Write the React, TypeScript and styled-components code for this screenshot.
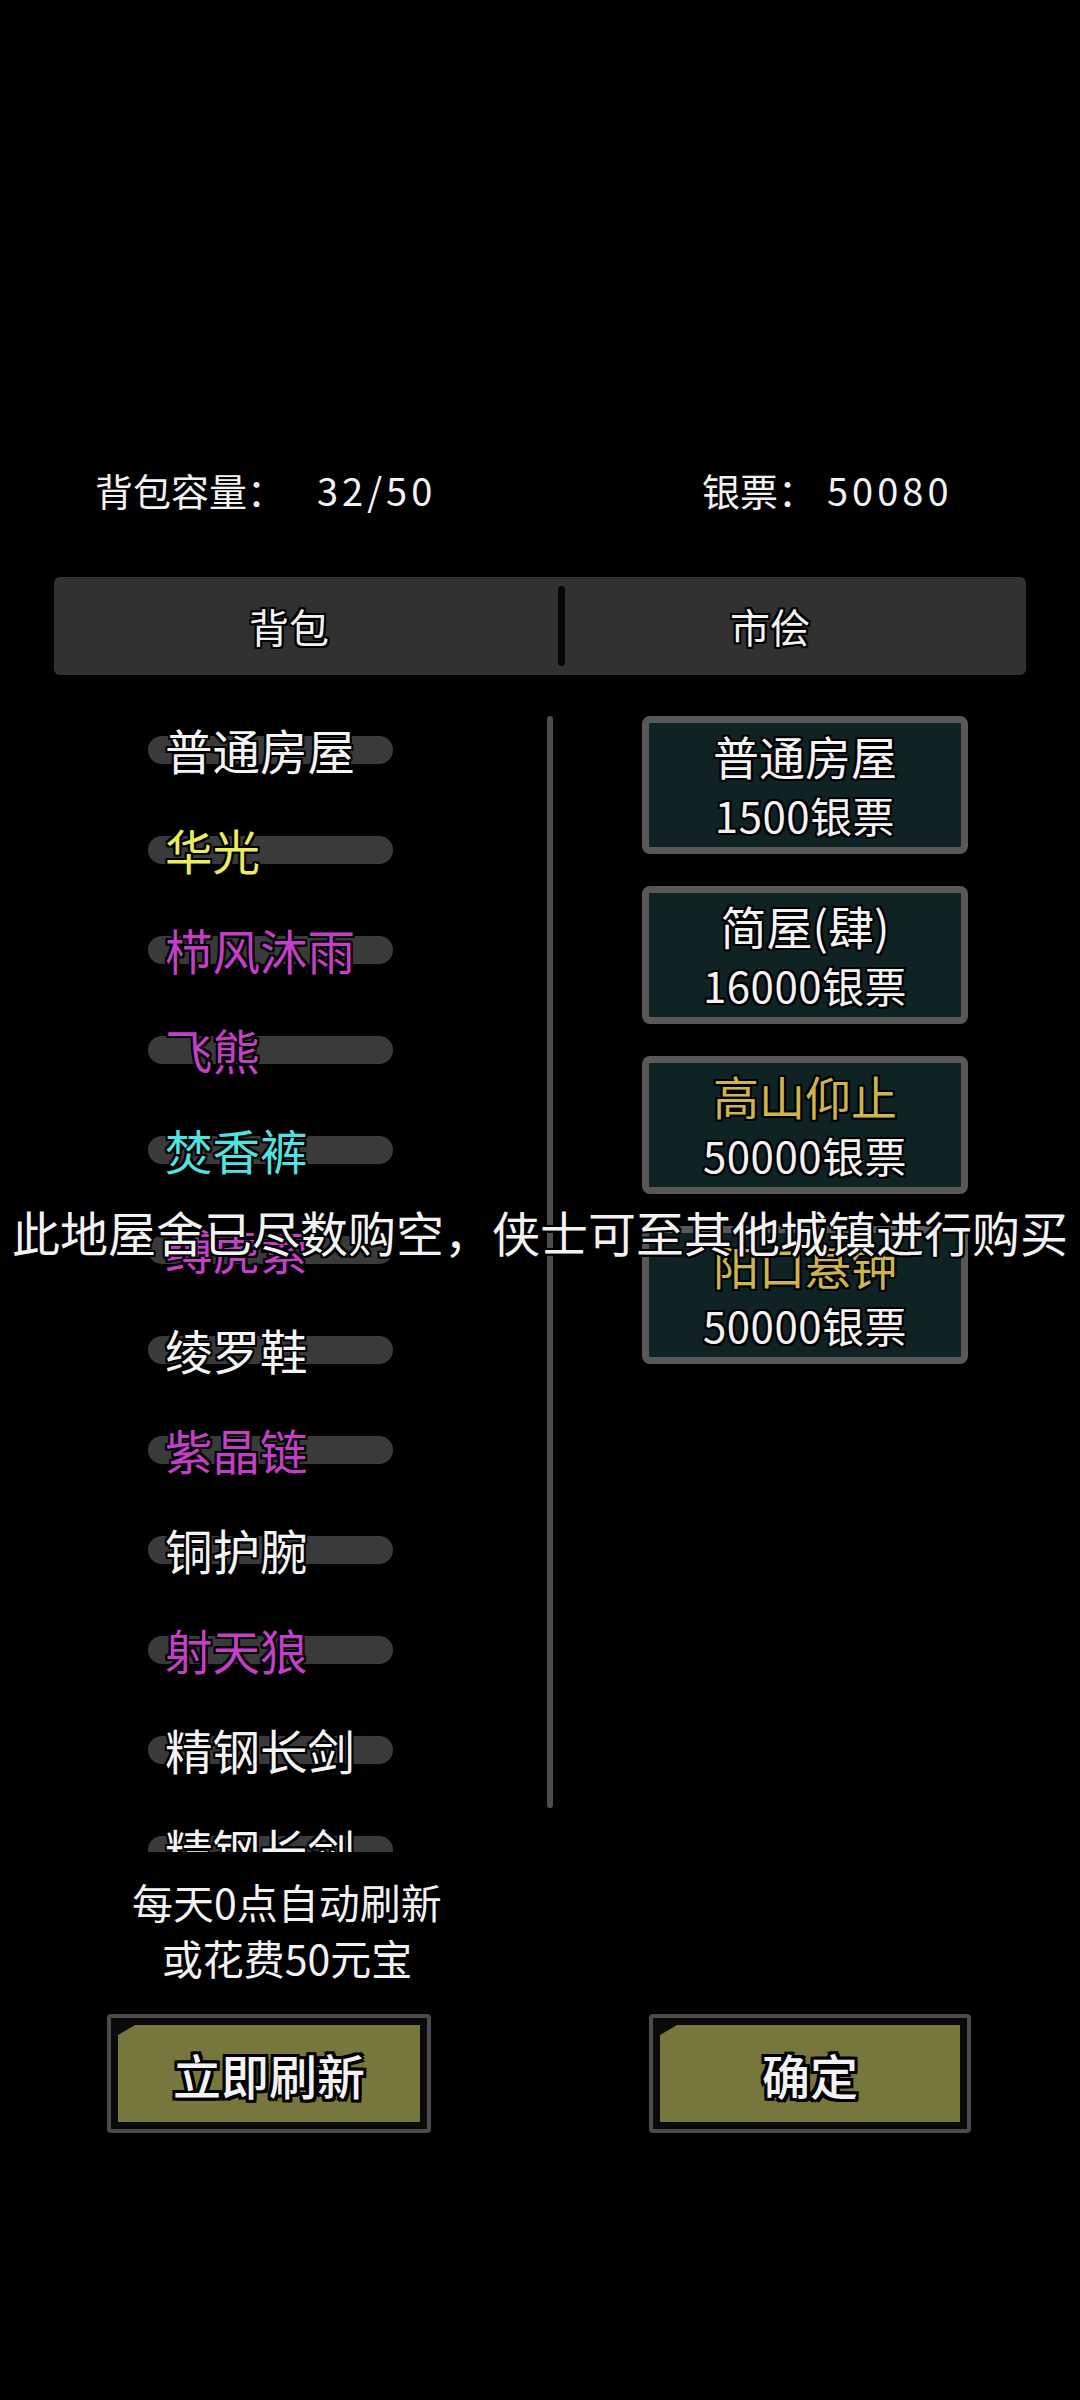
import styled, { createGlobalStyle, css } from 'styled-components';

const GlobalStyle = createGlobalStyle`
  html, body {
    margin: 0;
    padding: 0;
    background: #000;
  }
  body {
    font-family: 'Noto Sans CJK SC', 'Noto Sans', sans-serif;
    color: #f2f2f2;
  }
`;

const outline = (w: number) => css`
  text-shadow:
    -${w}px -${w}px 0 #000,
    ${w}px -${w}px 0 #000,
    -${w}px ${w}px 0 #000,
    ${w}px ${w}px 0 #000,
    0 -${w}px 0 #000,
    0 ${w}px 0 #000,
    -${w}px 0 0 #000,
    ${w}px 0 0 #000;
`;

const Screen = styled.main`
  width: 1080px;
  height: 2400px;
  display: flex;
  flex-direction: column;
  padding-top: 467px;
  box-sizing: border-box;
`;

const StatusRow = styled.div`
  display: flex;
  font-size: 38px;
  line-height: 46px;
  padding-left: 95px;
`;

const Stat = styled.span<{ $width?: number }>`
  width: ${(p) => (p.$width ? `${p.$width}px` : 'auto')};
  white-space: nowrap;
  ${outline(1)}
`;

const StatNum = styled.span<{ $gap: number }>`
  margin-left: ${(p) => p.$gap}px;
  letter-spacing: 4px;
`;

const TabBar = styled.div`
  margin: 64px 0 0 54px;
  width: 972px;
  height: 98px;
  display: flex;
  align-items: center;
  background: #313131;
  border-radius: 6px;
`;

const Tab = styled.div<{ $width: number; $shift: number }>`
  width: ${(p) => p.$width}px;
  box-sizing: border-box;
  padding-right: ${(p) => p.$shift}px;
  text-align: center;
  font-size: 40px;
  line-height: 98px;
  ${outline(2)}
`;

const TabDivider = styled.div`
  width: 7px;
  height: 80px;
  border-radius: 4px;
  background: #050505;
`;

const Body = styled.div`
  position: relative;
  margin-top: 25px;
  display: flex;
  height: 1152px;
`;

const ListPane = styled.div`
  display: flex;
  padding-left: 148px;
  width: 405px;
`;

const ListViewport = styled.div`
  width: 399px;
  height: 1152px;
  overflow: hidden;
`;

const Item = styled.div`
  display: grid;
  height: 100px;
  align-items: center;
`;

const Pill = styled.div`
  grid-area: 1 / 1;
  width: 245px;
  height: 28px;
  border-radius: 14px;
  background: #3a3a3a;
`;

const ItemName = styled.span<{ $color: string }>`
  grid-area: 1 / 1;
  padding-left: 17px;
  font-size: 47.5px;
  line-height: 60px;
  color: ${(p) => p.$color};
  ${outline(2)}
`;

const ScrollTrack = styled.div`
  width: 6px;
  height: 1092px;
  margin-top: 16px;
  border-radius: 3px;
  background: #4d4d4d;
`;

const ShopPane = styled.div`
  display: flex;
  flex-direction: column;
  gap: 32px;
  padding: 16px 0 0 89px;
`;

const Card = styled.div`
  width: 326px;
  height: 138px;
  box-sizing: border-box;
  border: 7px solid #585858;
  border-radius: 8px;
  background: #0f2224;
  display: flex;
  flex-direction: column;
  align-items: center;
  justify-content: center;
`;

const CardTitle = styled.div<{ $color: string }>`
  font-size: 46px;
  line-height: 60px;
  color: ${(p) => p.$color};
  ${outline(2)}
`;

const CardPrice = styled.div`
  font-size: 42px;
  line-height: 60px;
  letter-spacing: 0.5px;
  ${outline(2)}
`;

const Notice = styled.div`
  position: absolute;
  left: 0;
  right: 0;
  top: 503px;
  text-align: center;
  font-size: 48px;
  line-height: 56px;
  white-space: nowrap;
  ${outline(2)}
`;

const RefreshNote = styled.div`
  width: 574px;
  margin-top: 21px;
  text-align: center;
  font-size: 41px;
  line-height: 56px;
  ${outline(2)}
`;

const ButtonRow = styled.div`
  display: flex;
  margin-top: 29px;
  padding-left: 107px;
  gap: 218px;
`;

const ButtonFrame = styled.div<{ $width: number }>`
  width: ${(p) => p.$width}px;
  height: 119px;
  box-sizing: border-box;
  border: 4px solid #4b4b4b;
  border-radius: 4px;
  background: #0a0a0a;
  padding: 7px;
`;

const ButtonFace = styled.div`
  height: 100%;
  background: #77763d;
  clip-path: polygon(17px 0, 100% 0, 100% 100%, 0 100%, 0 10px);
  display: flex;
  align-items: center;
  justify-content: center;
  font-size: 48px;
  font-weight: 500;
  ${outline(3)}
`;

const WHITE = '#f4f4f4';
const YELLOW = '#ecec5c';
const MAGENTA = '#c23fc6';
const CYAN = '#52e2e2';
const GOLD = '#cdb44c';

const bagItems = [
  { name: '普通房屋', color: WHITE },
  { name: '华光', color: YELLOW },
  { name: '栉风沐雨', color: MAGENTA },
  { name: '飞熊', color: MAGENTA },
  { name: '焚香裤', color: CYAN },
  { name: '缚虎索', color: MAGENTA },
  { name: '绫罗鞋', color: WHITE },
  { name: '紫晶链', color: MAGENTA },
  { name: '铜护腕', color: WHITE },
  { name: '射天狼', color: MAGENTA },
  { name: '精钢长剑', color: WHITE },
  { name: '精钢长剑', color: WHITE },
];

const shopItems = [
  { name: '普通房屋', price: 1500, color: WHITE },
  { name: '简屋(肆)', price: 16000, color: WHITE },
  { name: '高山仰止', price: 50000, color: GOLD },
  { name: '阳口悬钟', price: 50000, color: GOLD },
];

export default function App() {
  return (
    <>
      <GlobalStyle />
      <Screen>
        <StatusRow>
          <Stat $width={607}>
            背包容量：<StatNum $gap={32}>32/50</StatNum>
          </Stat>
          <Stat>
            银票：<StatNum $gap={11}>50080</StatNum>
          </Stat>
        </StatusRow>

        <TabBar>
          <Tab $width={504} $shift={34}>背包</Tab>
          <TabDivider />
          <Tab $width={461} $shift={51}>市侩</Tab>
        </TabBar>

        <Body>
          <ListPane>
            <ListViewport>
              {bagItems.map((it, i) => (
                <Item key={i}>
                  <Pill />
                  <ItemName $color={it.color}>{it.name}</ItemName>
                </Item>
              ))}
            </ListViewport>
            <ScrollTrack />
          </ListPane>

          <ShopPane>
            {shopItems.map((it) => (
              <Card key={it.name}>
                <CardTitle $color={it.color}>{it.name}</CardTitle>
                <CardPrice>{it.price}银票</CardPrice>
              </Card>
            ))}
          </ShopPane>

          <Notice>此地屋舍已尽数购空，侠士可至其他城镇进行购买</Notice>
        </Body>

        <RefreshNote>
          每天0点自动刷新
          <br />
          或花费50元宝
        </RefreshNote>

        <ButtonRow>
          <ButtonFrame $width={324}>
            <ButtonFace>立即刷新</ButtonFace>
          </ButtonFrame>
          <ButtonFrame $width={322}>
            <ButtonFace>确定</ButtonFace>
          </ButtonFrame>
        </ButtonRow>
      </Screen>
    </>
  );
}
